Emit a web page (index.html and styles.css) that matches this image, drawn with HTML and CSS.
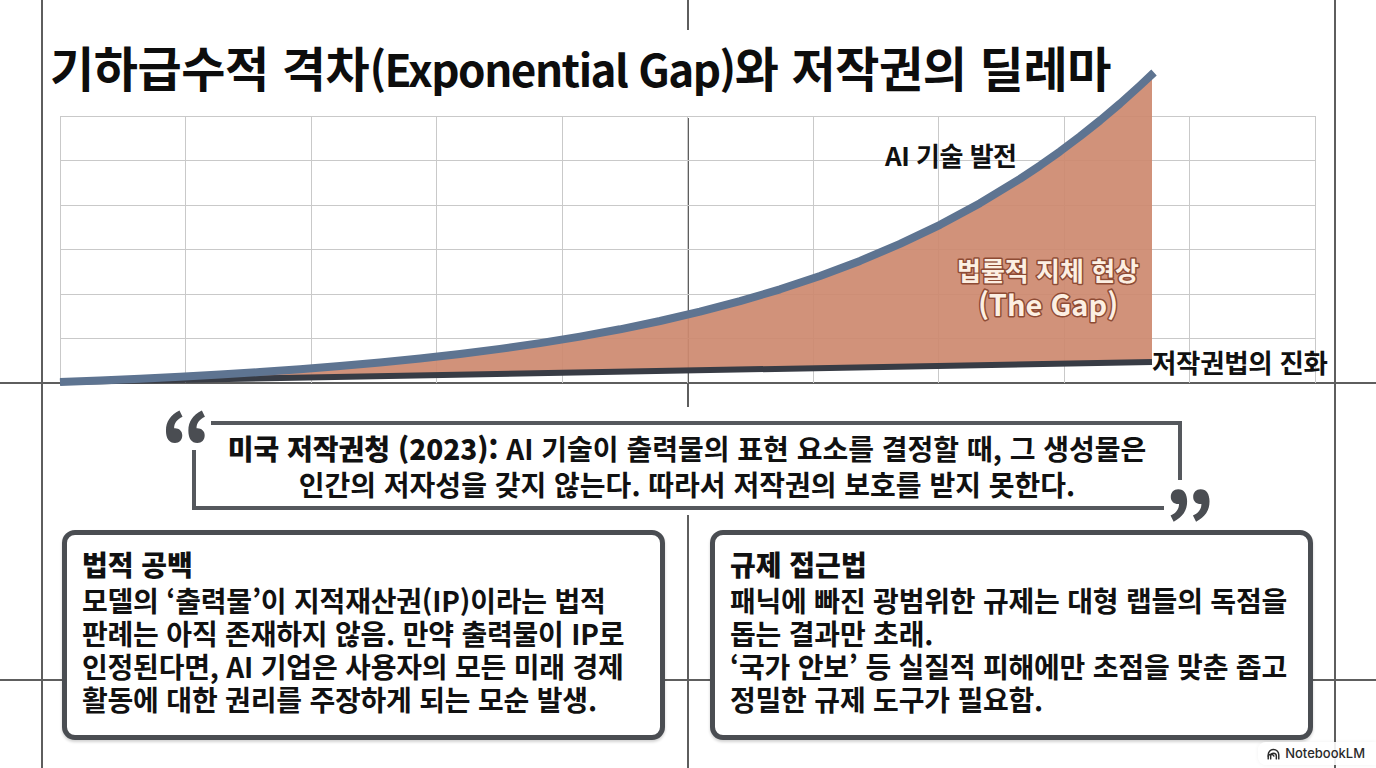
FILE: index.html
```html
<!DOCTYPE html>
<html lang="ko">
<head>
<meta charset="utf-8">
<title>기하급수적 격차와 저작권의 딜레마</title>
<link rel="stylesheet" href="styles.css">
</head>
<body>
<div class="slide">
  <section class="top">
    <h1 class="title">기하급수적 격차<span class="latin">(Exponential Gap)</span>와 저작권의 딜레마</h1>
    <svg class="chart" viewBox="0 0 1376 400" width="1376" height="400">
      <g class="grid">
        <line x1="60.5" y1="116" x2="60.5" y2="383"/>
        <line x1="185.5" y1="116" x2="185.5" y2="383"/>
        <line x1="311.5" y1="116" x2="311.5" y2="383"/>
        <line x1="436.5" y1="116" x2="436.5" y2="383"/>
        <line x1="562.5" y1="116" x2="562.5" y2="383"/>
        <line x1="687.5" y1="116" x2="687.5" y2="383"/>
        <line x1="813.5" y1="116" x2="813.5" y2="383"/>
        <line x1="938.5" y1="116" x2="938.5" y2="383"/>
        <line x1="1064.5" y1="116" x2="1064.5" y2="383"/>
        <line x1="1189.5" y1="116" x2="1189.5" y2="383"/>
        <line x1="1315.5" y1="116" x2="1315.5" y2="383"/>
        <line x1="60" y1="116.5" x2="1316" y2="116.5"/>
        <line x1="60" y1="160.5" x2="1316" y2="160.5"/>
        <line x1="60" y1="205.5" x2="1316" y2="205.5"/>
        <line x1="60" y1="249.5" x2="1316" y2="249.5"/>
        <line x1="60" y1="294.5" x2="1316" y2="294.5"/>
        <line x1="60" y1="338.5" x2="1316" y2="338.5"/>
      </g>
      <polygon class="gap" points="60,382 100,380.5 140,378.7 180,376.8 220,374.6 260,372.1 300,369.3 340,366.1 380,362.5 420,358.5 460,354 500,348.9 540,343.1 580,336.6 620,329.3 660,321 700,311.7 740,301.2 780,289.3 820,276 860,260.9 900,243.9 940,224.8 980,203.2 1020,178.9 1040,165.6 1060,151.4 1080,136.4 1100,120.5 1120,103.6 1140,85.6 1152,74.3 1152,362"/>
      <line class="law" x1="60" y1="382" x2="1152" y2="362"/>
      <polyline class="ai" points="60,382 100,380.5 140,378.7 180,376.8 220,374.6 260,372.1 300,369.3 340,366.1 380,362.5 420,358.5 460,354 500,348.9 540,343.1 580,336.6 620,329.3 660,321 700,311.7 740,301.2 780,289.3 820,276 860,260.9 900,243.9 940,224.8 980,203.2 1020,178.9 1040,165.6 1060,151.4 1080,136.4 1100,120.5 1120,103.6 1140,85.6 1154,72.5"/>
      <text class="lbl-ai" x="885" y="166">AI 기술 발전</text>
      <text class="lbl-gap" x="1048" y="281">법률적 지체 현상</text>
      <text class="lbl-gap lbl-gap2" x="1048" y="316">(The Gap)</text>
      <text class="lbl-law" x="1152" y="373">저작권법의 진화</text>
    </svg>
  </section>

  <section class="quote-wrap">
    <div class="quote-frame">
      <span class="q q-open">“</span>
      <p class="quote-text"><strong>미국 저작권청 (2023):</strong> AI 기술이 출력물의 표현 요소를 결정할 때, 그 생성물은<br>인간의 저자성을 갖지 않는다. 따라서 저작권의 보호를 받지 못한다.</p>
      <span class="q q-close">”</span>
    </div>
  </section>

  <section class="cards">
    <article class="card">
      <h2>법적 공백</h2>
      <p>모델의 ‘출력물’이 지적재산권(IP)이라는 법적<br>판례는 아직 존재하지 않음. 만약 출력물이 IP로<br>인정된다면, AI 기업은 사용자의 모든 미래 경제<br>활동에 대한 권리를 주장하게 되는 모순 발생.</p>
    </article>
    <article class="card">
      <h2>규제 접근법</h2>
      <p>패닉에 빠진 광범위한 규제는 대형 랩들의 독점을<br>돕는 결과만 초래.<br>‘국가 안보’ 등 실질적 피해에만 초점을 맞춘 좁고<br>정밀한 규제 도구가 필요함.</p>
    </article>
  </section>

  <div class="badge">
    <svg class="badge-icon" viewBox="0 0 16 14" width="13" height="12">
      <path d="M1.5 13V8a6.5 6.5 0 0 1 13 0v5"/>
      <path d="M4.5 13V9.5a3.5 3.5 0 0 1 7 0V13"/>
      <path d="M1.5 9.5a4 4 0 0 1 7 0"/>
    </svg>
    <span>NotebookLM</span>
  </div>
</div>
</body>
</html>
```

FILE: styles.css
```css
html, body {
  margin: 0;
  padding: 0;
  background: #ffffff;
}

.slide {
  position: relative;
  width: 1376px;
  height: 768px;
  overflow: hidden;
  display: flex;
  flex-direction: column;
  font-family: "Noto Sans CJK KR", "Noto Sans", sans-serif;
  color: #111;
  background:
    linear-gradient(#5e5e5e, #5e5e5e) 41px 0 / 2px 100% no-repeat,
    linear-gradient(#5e5e5e, #5e5e5e) 687px 0 / 2px 100% no-repeat,
    linear-gradient(#5e5e5e, #5e5e5e) 1334px 0 / 2px 100% no-repeat,
    linear-gradient(#5e5e5e, #5e5e5e) 0 382px / 100% 2px no-repeat,
    linear-gradient(#5e5e5e, #5e5e5e) 0 679px / 100% 2px no-repeat,
    #ffffff;
}

/* ---------- top: title + chart ---------- */
.top {
  display: grid;
  height: 400px;
}

.title {
  grid-area: 1 / 1;
  align-self: start;
  justify-self: start;
  margin: 30px 0 0 47px;
  padding: 9px 2px 22px 3px;
  background: #ffffff;
  font-size: 48px;
  line-height: 55px;
  font-weight: 700;
  color: #0d0d0d;
  letter-spacing: -0.4px;
  white-space: nowrap;
}

.title .latin {
  font-size: 44px;
  letter-spacing: -1.5px;
}

.chart {
  grid-area: 1 / 1;
  display: block;
}

.grid line {
  stroke: #c9c9c9;
  stroke-width: 1;
}

.gap {
  fill: #cd8a70;
  fill-opacity: 0.93;
}

.law {
  stroke: #383c45;
  stroke-width: 6;
}

.ai {
  fill: none;
  stroke: #5e7491;
  stroke-width: 8;
  stroke-linejoin: round;
}

.lbl-ai,
.lbl-law,
.lbl-gap {
  font-family: "Noto Sans CJK KR", "Noto Sans", sans-serif;
  font-weight: 700;
}

.lbl-ai {
  font-size: 26px;
  letter-spacing: -0.5px;
  fill: #111;
}

.lbl-law {
  font-size: 26.5px;
  letter-spacing: -0.3px;
  fill: #111;
}

.lbl-gap {
  font-size: 26px;
  text-anchor: middle;
  fill: #fcefe2;
  stroke: #8e4b34;
  stroke-width: 3px;
  paint-order: stroke;
  stroke-linejoin: round;
}

.lbl-gap2 {
  font-size: 29px;
}

/* ---------- quote ---------- */
.quote-wrap {
  align-self: flex-start;
  margin: 7px 0 0 160px;
  width: 1055px;
  box-sizing: border-box;
  padding: 14px 33px 5px 32px;
  background: #ffffff;
}

.quote-frame {
  position: relative;
  box-sizing: border-box;
  height: 89px;
  border: 4px solid #55585d;
  display: flex;
  align-items: center;
  justify-content: center;
}

.quote-text {
  margin: 0;
  text-align: center;
  font-size: 28px;
  line-height: 36px;
  font-weight: 700;
  color: #111;
  white-space: nowrap;
}

.quote-text strong {
  font-weight: 900;
}

.q {
  position: absolute;
  box-sizing: border-box;
  background: #ffffff;
  color: #4a4d52;
  font-family: "Noto Sans CJK KR", sans-serif;
  font-weight: 900;
  font-size: 80px;
  line-height: 62px;
  text-align: center;
  overflow: visible;
}

.q-open {
  left: -35px;
  top: -18px;
  width: 50px;
  height: 43px;
  padding-right: 4px;
}

.q-close {
  left: 968px;
  top: 55px;
  width: 50px;
  height: 40px;
  padding-top: 7px;
}

/* ---------- cards ---------- */
.cards {
  display: flex;
  gap: 45px;
  margin: 15px 0 0 62px;
}

.card {
  box-sizing: border-box;
  width: 603px;
  height: 210px;
  padding: 9px 15px;
  border: 5px solid #4a4d52;
  border-radius: 13px;
  background: #ffffff;
  box-shadow: 0 2px 3px rgba(0, 0, 0, 0.18);
}

.card h2 {
  margin: 0;
  font-size: 28px;
  line-height: 40px;
  font-weight: 900;
  color: #111;
}

.card p {
  margin: 0;
  font-size: 28px;
  line-height: 33px;
  font-weight: 700;
  color: #111;
  letter-spacing: -0.2px;
  white-space: nowrap;
}

/* ---------- badge ---------- */
.badge {
  position: absolute;
  right: 0;
  bottom: 3px;
  display: flex;
  align-items: center;
  gap: 5px;
  padding: 4px 11px 4px 9px;
  border-radius: 8px 0 0 8px;
  background: rgba(255, 255, 255, 0.9);
  box-shadow: 0 0 4px rgba(0, 0, 0, 0.06);
  font-family: "Inter", "Roboto", sans-serif;
  font-size: 13px;
  font-weight: 500;
  line-height: 15px;
  color: #2a2a2a;
}

.badge-icon path {
  fill: none;
  stroke: #2a2a2a;
  stroke-width: 1.8;
  stroke-linecap: round;
}
```
